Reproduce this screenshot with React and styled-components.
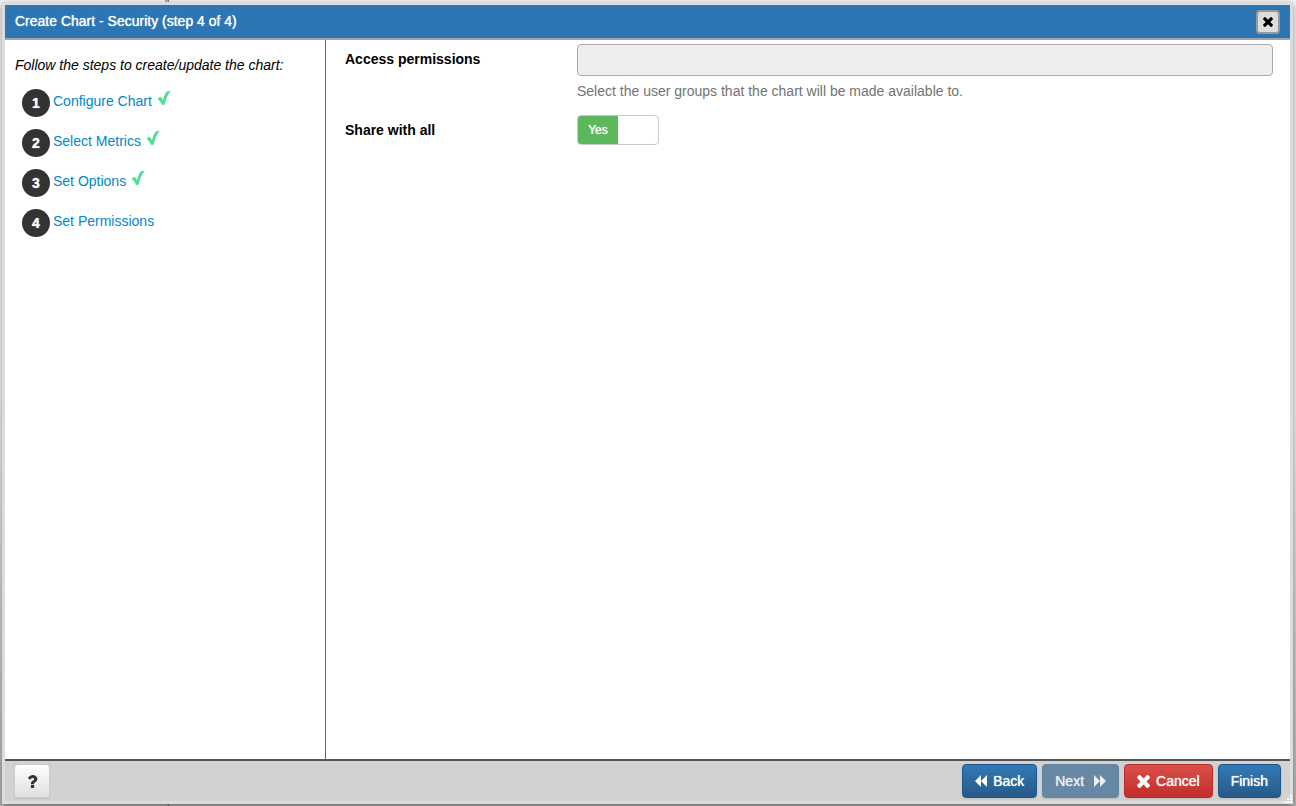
import React, { useState } from 'react';
import styled, { createGlobalStyle } from 'styled-components';

const GlobalStyle = createGlobalStyle`
  * {
    box-sizing: border-box;
  }
  body {
    margin: 0;
    background-color: #efefef;
    font-family: "Liberation Sans", Arial, Helvetica, sans-serif;
    font-size: 14px;
    line-height: 20px;
    color: #000;
  }
`;

/* The page behind, of which only a thin rim shows */
const Backdrop = styled.div`
  height: 100vh;
  padding: 2px 3px 2px 2px;
  overflow: hidden;
  background:
    linear-gradient(90deg, transparent 165px, #a8a8a8 165px, #a8a8a8 168px, #777 168px, #777 169px, transparent 169px),
    linear-gradient(#f2f2f2 50%, #b5b5b5);
`;

const Dialog = styled.section`
  position: relative;
  display: flex;
  flex-direction: column;
  height: 100%;
  border: 3px solid #dcdcdc;
  background-color: #fff;
  box-shadow: 0 3px 7px rgba(0, 0, 0, 0.4);
`;

const TitleBar = styled.header`
  display: flex;
  justify-content: space-between;
  align-items: center;
  height: 35px;
  padding: 0 10px;
  border-bottom: 2px solid #a3a3a3;
  background-color: #2c76b4;
`;

const Title = styled.h1`
  align-self: flex-start;
  margin: 0;
  font-size: 14px;
  font-weight: 400;
  line-height: 32px;
  color: #fff;
  text-shadow: 0 0 1px #fff;
`;

const CloseButton = styled.button`
  display: flex;
  align-items: center;
  justify-content: center;
  width: 24px;
  height: 24px;
  padding: 0;
  border: 2px solid #999;
  border-radius: 4px;
  background-color: #ddd;
  color: #000;
`;

const Body = styled.div`
  display: flex;
  flex: 1;
`;

const Steps = styled.nav`
  flex: 0 0 321px;
  padding: 15px 10px;
  border-right: 1px solid #2c76b4;
`;

const Intro = styled.p`
  margin: 0 0 14px;
  font-style: italic;
`;

const StepList = styled.ol`
  display: flex;
  flex-direction: column;
  gap: 12px;
  margin: 0;
  padding: 0 0 0 7px;
  list-style: none;
`;

const StepItem = styled.li`
  display: flex;
  align-items: flex-start;
  gap: 3px;
  height: 28px;
`;

const StepNumber = styled.span`
  width: 28px;
  height: 28px;
  border-radius: 50%;
  background-color: #333;
  color: #fff;
  font-weight: 700;
  line-height: 28px;
  text-align: center;
  text-shadow: 0 0 1px #fff;
`;

const StepLink = styled.a`
  color: #0088cc;
  line-height: 24px;
  text-decoration: none;
`;

const Tick = styled.svg`
  width: 14px;
  height: 16px;
  margin: 1px 0 0 2px;
  fill: #54de93;
`;

const Form = styled.form`
  flex: 1;
  padding: 4px 17px 0 19px;
`;

const FieldRow = styled.div`
  display: grid;
  grid-template-columns: 232px 1fr;
  margin-bottom: 14px;
`;

const FieldLabel = styled.label`
  font-weight: 700;
  line-height: 30px;
`;

const GroupInput = styled.input`
  display: block;
  width: 100%;
  height: 32px;
  padding: 4px 6px;
  border: 1px solid #aaa;
  border-radius: 4px;
  background-color: #eee;
`;

const Hint = styled.p`
  margin: 5px 0 0;
  color: #737373;
`;

/* Green half slides out when the box is not ticked */
const Switch = styled.span`
  position: relative;
  display: flex;
  width: 82px;
  height: 30px;
  border: 1px solid #ccc;
  border-radius: 4px;
  background-color: #fff;
  overflow: hidden;
  justify-content: ${(props) => (props.$on ? 'flex-start' : 'flex-end')};
`;

const SwitchInput = styled.input`
  position: absolute;
  inset: 0;
  width: 100%;
  height: 100%;
  margin: 0;
  opacity: 0;
`;

const SwitchText = styled.span`
  width: 40px;
  background-color: ${(props) => (props.$on ? '#5cb85c' : '#eee')};
  color: ${(props) => (props.$on ? '#fff' : '#333')};
  font-size: 12px;
  line-height: 28px;
  text-align: center;
  text-shadow: 0 0 1px currentColor;
`;

const Footer = styled.footer`
  display: flex;
  justify-content: space-between;
  align-items: flex-start;
  height: 42px;
  padding: 3px 9px 0;
  border-top: 2px solid #555;
  background-color: #d2d2d2;
`;

const Actions = styled.div`
  display: flex;
  gap: 5px;
`;

const themes = {
  primary: 'border-color: #1f5688; background: linear-gradient(#3379b7, #265a88);',
  danger: 'border-color: #b92c28; background: linear-gradient(#dc4f4b, #c12e2a);',
  muted: 'border-color: #6285a4; background: #6688a5;',
};

const ActionButton = styled.button`
  display: flex;
  align-items: center;
  gap: ${(props) => (props.$wide ? '10px' : '6px')};
  height: 34px;
  padding: 0 12px;
  border: 1px solid;
  border-radius: 4px;
  ${(props) => themes[props.$kind]}
  color: ${(props) => (props.disabled ? '#eee' : '#fff')};
  font: inherit;
  text-shadow: 0 0 1px currentColor;
  box-shadow: 0 1px 2px rgba(0, 0, 0, 0.1);
`;

const HelpButton = styled.button`
  display: flex;
  align-items: center;
  justify-content: center;
  width: 36px;
  height: 34px;
  padding: 0;
  border: 1px solid #ccc;
  border-radius: 4px;
  background: linear-gradient(#fff, #e0e0e0);
  color: #333;
  box-shadow: 0 1px 2px rgba(0, 0, 0, 0.1);
`;

const Icon = styled.svg`
  width: ${(props) => props.$size}px;
  height: ${(props) => props.$size}px;
  fill: currentColor;
`;

const Grip = styled.svg`
  position: absolute;
  right: -3px;
  bottom: -3px;
  width: 10px;
  height: 10px;
  fill: #fff;
`;

const steps = [
  { name: 'Configure Chart', done: true },
  { name: 'Select Metrics', done: true },
  { name: 'Set Options', done: true },
  { name: 'Set Permissions', done: false },
];

function CrossIcon({ size }) {
  return (
    <Icon $size={size} viewBox="110 366 1188 1188" aria-hidden="true">
      <path d="M1298 1322q0 40-28 68l-136 136q-28 28-68 28t-68-28l-294-294-294 294q-28 28-68 28t-68-28l-136-136q-28-28-28-68t28-68l294-294-294-294q-28-28-28-68t28-68l136-136q28-28 68-28t68 28l294 294 294-294q28-28 68-28t68 28l136 136q28 28 28 68t-28 68l-294 294 294 294q28 28 28 68z" />
    </Icon>
  );
}

function QuestionIcon() {
  return (
    <Icon $size={13} viewBox="-100 128 1280 1280" aria-hidden="true">
      <path d="M704 1128v240q0 16-12 28t-28 12h-240q-16 0-28-12t-12-28v-240q0-16 12-28t28-12h240q16 0 28 12t12 28zm316-600q0 54-15.500 101t-35 76.500-55 59.500-57.500 43.500-61 35.500q-41 23-68.500 65t-27.500 67q0 17-12 32.500t-28 15.500h-240q-15 0-25.500-18.500t-10.500-37.500v-45q0-83 65-156.500t143-108.500q59-27 84-56t25-76q0-42-46.500-74t-107.500-32q-65 0-108 29-35 25-107 115-13 16-31 16-12 0-25-8l-164-125q-13-10-15.500-25t5.500-28q160-266 464-266 80 0 161 31t146 83 106 127.500 41 158.500z" />
    </Icon>
  );
}

function StepNav() {
  return (
    <Steps>
      <Intro>Follow the steps to create/update the chart:</Intro>
      <StepList>
        {steps.map((step, i) => (
          <StepItem key={step.name}>
            <StepNumber>{i + 1}</StepNumber>
            <StepLink href="#">{step.name}</StepLink>
            {step.done && (
              <Tick viewBox="0 0 14 16" aria-hidden="true">
                <path d="M0.500 8.500 L3.800 6.800 L6 10 C7 6 8.300 2.800 10 1.200 L13.800 0.800 C11 4 9 9 7.400 15 L5.300 15 C3.900 12.500 2.400 10.300 0.500 8.500 Z" />
              </Tick>
            )}
          </StepItem>
        ))}
      </StepList>
    </Steps>
  );
}

export default function App() {
  const [shared, setShared] = useState(true);

  return (
    <>
      <GlobalStyle />
      <Backdrop>
        <Dialog>
          <TitleBar>
            <Title>Create Chart - Security (step 4 of 4)</Title>
            <CloseButton aria-label="Close"><CrossIcon size={10} /></CloseButton>
          </TitleBar>
          <Body>
            <StepNav />
            <Form>
              <FieldRow>
                <FieldLabel htmlFor="groups">Access permissions</FieldLabel>
                <div>
                  <GroupInput id="groups" type="text" disabled />
                  <Hint>Select the user groups that the chart will be made available to.</Hint>
                </div>
              </FieldRow>
              <FieldRow>
                <FieldLabel htmlFor="share">Share with all</FieldLabel>
                <Switch $on={shared}>
                  <SwitchText $on={shared}>{shared ? 'Yes' : 'No'}</SwitchText>
                  <SwitchInput
                    id="share"
                    type="checkbox"
                    checked={shared}
                    onChange={(e) => setShared(e.target.checked)}
                  />
                </Switch>
              </FieldRow>
            </Form>
          </Body>
          <Footer>
            <HelpButton aria-label="Help"><QuestionIcon /></HelpButton>
            <Actions>
              <ActionButton $kind="primary">
                <Icon $size={12} viewBox="0 0 12 12" aria-hidden="true">
                  <path d="M0 6 L6 0 V12 Z M6 6 L12 0 V12 Z" />
                </Icon>
                Back
              </ActionButton>
              <ActionButton $kind="muted" $wide disabled>
                Next
                <Icon $size={12} viewBox="0 0 12 12" aria-hidden="true">
                  <path d="M0 0 L6 6 L0 12 Z M6 0 L12 6 L6 12 Z" />
                </Icon>
              </ActionButton>
              <ActionButton $kind="danger"><CrossIcon size={13} />Cancel</ActionButton>
              <ActionButton $kind="primary">Finish</ActionButton>
            </Actions>
          </Footer>
          <Grip viewBox="0 0 10 10" aria-hidden="true">
            <path d="M7 1h2v2H7zM4 4h2v2H4zM7 4h2v2H7zM1 7h2v2H1zM4 7h2v2H4zM7 7h2v2H7z" />
          </Grip>
        </Dialog>
      </Backdrop>
    </>
  );
}
